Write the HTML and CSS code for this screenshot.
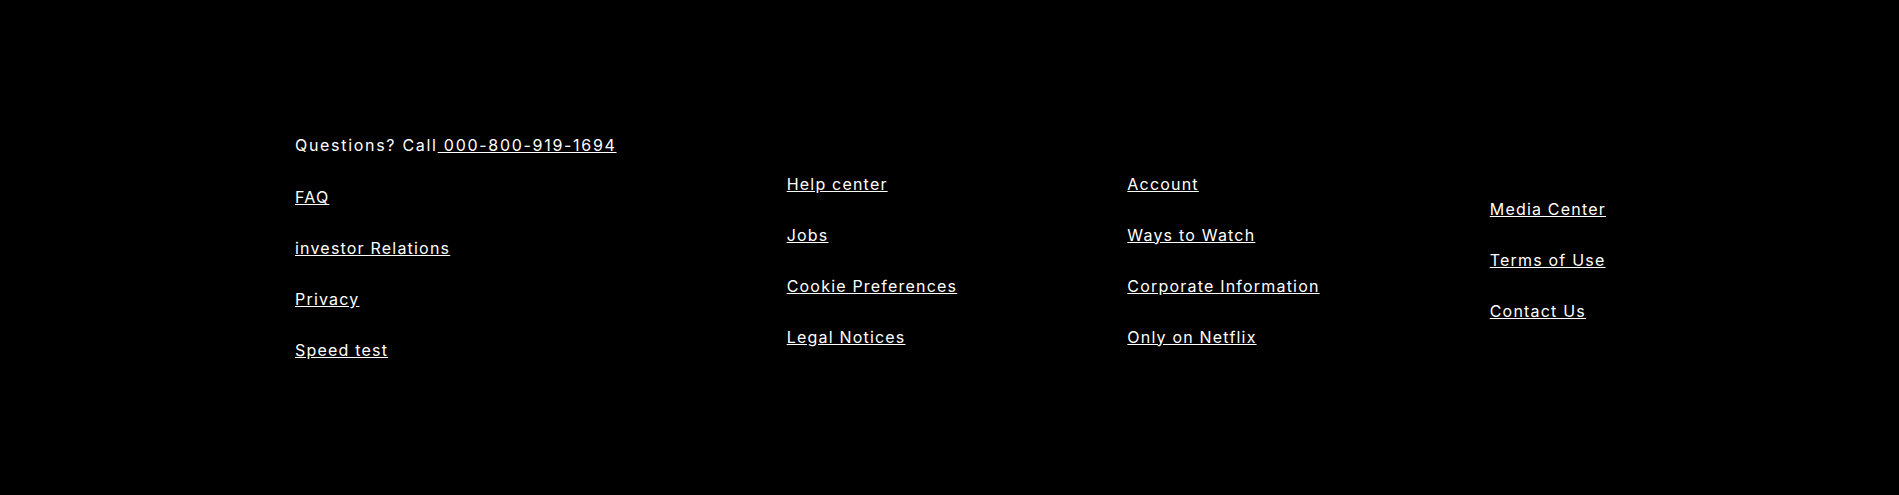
FILE: index.html
```html
<!DOCTYPE html>
<html lang="en">
<head>
<meta charset="utf-8">
<title>Footer</title>
<link rel="stylesheet" href="styles.css">
</head>
<body>
<footer class="footer">
  <div class="col col-first">
    <p class="questions">Questions? Call<a href="#"> 000-800-919-1694</a></p>
    <ul class="links">
      <li><a href="#">FAQ</a></li>
      <li><a href="#">investor Relations</a></li>
      <li><a href="#">Privacy</a></li>
      <li><a href="#">Speed test</a></li>
    </ul>
  </div>
  <div class="col">
    <ul class="links">
      <li><a href="#">Help center</a></li>
      <li><a href="#">Jobs</a></li>
      <li><a href="#">Cookie Preferences</a></li>
      <li><a href="#">Legal Notices</a></li>
    </ul>
  </div>
  <div class="col">
    <ul class="links">
      <li><a href="#">Account</a></li>
      <li><a href="#">Ways to Watch</a></li>
      <li><a href="#">Corporate Information</a></li>
      <li><a href="#">Only on Netflix</a></li>
    </ul>
  </div>
  <div class="col">
    <ul class="links">
      <li><a href="#">Media Center</a></li>
      <li><a href="#">Terms of Use</a></li>
      <li><a href="#">Contact Us</a></li>
    </ul>
  </div>
</footer>
</body>
</html>
```
FILE: styles.css
```css
* {
  box-sizing: border-box;
}

html, body {
  margin: 0;
  padding: 0;
  background: #000;
}

body {
  font-family: Inter, "Open Sans", sans-serif;
  font-size: 16px;
  color: #fff;
  letter-spacing: 1.2px;
}

.footer {
  height: 495px;
  padding: 25px 293px 0 295px;
  display: flex;
  justify-content: space-between;
  align-items: center;
}

.col-first {
  padding-bottom: 25px;
}

.questions {
  margin: 0 0 28px;
  line-height: 24px;
  letter-spacing: 1.7px;
}

.questions a {
  color: #fff;
}

.links {
  list-style: none;
  margin: 0;
  padding: 0;
  display: flex;
  flex-direction: column;
  gap: 27px;
}

.links li {
  line-height: 24px;
}

.links a {
  color: #fff;
  text-decoration: underline;
}
```
